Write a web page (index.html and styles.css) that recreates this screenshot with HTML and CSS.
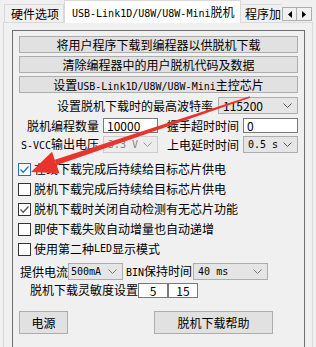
FILE: index.html
```html
<!DOCTYPE html>
<html lang="zh">
<head>
  <meta charset="UTF-8" />
  <title>USB-Link1D 脱机</title>
  <link rel="stylesheet" href="styles.css">
</head>
<body>
  <div class="tabs">
    <div class="tab first">硬件选项</div>
    <div class="tab active"><span class="mono">USB-Link1D/U8W/U8W-Mini</span>脱机</div>
    <div class="tab clipped">程序加</div>
    <div class="scroller">
      <span class="sbtn"><svg width="4" height="7" viewBox="0 0 4 7"><path d="M4 0V7L0 3.5Z" fill="#000"/></svg></span>
      <span class="sbtn"><svg width="4" height="7" viewBox="0 0 4 7"><path d="M0 0V7L4 3.5Z" fill="#000"/></svg></span>
    </div>
  </div>

  <div class="pane">
    <div class="group">
      <button class="btn">将用户程序下载到编程器以供脱机下载</button>
      <button class="btn">清除编程器中的用户脱机代码及数据</button>
      <button class="btn">设置<span class="mono">USB-Link1D/U8W/U8W-Mini</span>主控芯片</button>

      <div class="row baud">
        <span class="label">设置脱机下载时的最高波特率</span>
        <div class="combo wide"><span>115200</span><svg class="chev" width="9" height="5" viewBox="0 0 9 5"><path d="M0.5 0.5L4.5 4.5L8.5 0.5" fill="none" stroke="#555"/></svg></div>
      </div>

      <div class="grid">
        <span class="label">脱机编程数量</span>
        <div class="edit">10000</div>
        <span class="label">握手超时时间</span>
        <div class="edit">0</div>

        <span class="label"><span class="mono">S-VCC</span>输出电压</span>
        <div class="combo disabled"><span class="mono">3.3 V</span><svg class="chev" width="9" height="5" viewBox="0 0 9 5"><path d="M0.5 0.5L4.5 4.5L8.5 0.5" fill="none" stroke="#999"/></svg></div>
        <span class="label">上电延时时间</span>
        <div class="combo"><span class="mono">0.5 s</span><svg class="chev" width="9" height="5" viewBox="0 0 9 5"><path d="M0.5 0.5L4.5 4.5L8.5 0.5" fill="none" stroke="#555"/></svg></div>
      </div>

      <div class="checks">
        <label class="check"><span class="box hot"><svg width="11" height="11" viewBox="0 0 11 11"><path d="M1.5 5.5L4.2 8.2L9.5 2.5" fill="none" stroke="#2c6fc0" stroke-width="1.3"/></svg></span>在线下载完成后持续给目标芯片供电</label>
        <label class="check"><span class="box"></span>脱机下载完成后持续给目标芯片供电</label>
        <label class="check"><span class="box"><svg width="11" height="11" viewBox="0 0 11 11"><path d="M1.5 5.5L4.2 8.2L9.5 2.5" fill="none" stroke="#555" stroke-width="1.3"/></svg></span>脱机下载时关闭自动检测有无芯片功能</label>
        <label class="check"><span class="box"></span>即使下载失败自动增量也自动递增</label>
        <label class="check"><span class="box"></span>使用第二种<span class="mono">LED</span>显示模式</label>
      </div>

      <div class="row current">
        <span class="text">提供电流</span>
        <div class="combo small"><span class="mono">500mA</span><svg class="chev" width="9" height="5" viewBox="0 0 9 5"><path d="M0.5 0.5L4.5 4.5L8.5 0.5" fill="none" stroke="#777"/></svg></div>
        <span class="text hold"><span class="mono">BIN</span>保持时间</span>
        <div class="combo hold-combo"><span class="mono">40 ms</span><svg class="chev" width="9" height="5" viewBox="0 0 9 5"><path d="M0.5 0.5L4.5 4.5L8.5 0.5" fill="none" stroke="#777"/></svg></div>
      </div>

      <div class="row sense">
        <span class="text">脱机下载灵敏度设置</span>
        <div class="edit tiny">5</div>
        <div class="edit tiny">15</div>
      </div>

      <div class="row actions">
        <button class="btn big power">电源</button>
        <button class="btn big help">脱机下载帮助</button>
      </div>
    </div>
  </div>

  <!-- red annotation arrow pointing at the first checkbox -->
  <svg class="arrow" width="316" height="347" viewBox="0 0 316 347">
    <polygon points="250.2,97.8 249.8,96.2 54.8,159.8 56.4,165.2" fill="#e8342c"/>
    <polygon points="31,172 52,151.8 59.5,173.2" fill="#e8342c"/>
  </svg>
</body>
</html>
```

FILE: styles.css
```css
* {
  box-sizing: border-box;
  margin: 0;
  padding: 0;
}

body {
  width: 316px;
  height: 347px;
  overflow: hidden;
  position: relative;
  background: #f0f0f0;
  color: #000;
  font-family: "Noto Sans CJK SC", sans-serif;
  font-size: 12px;
  line-height: 1;
}

.mono {
  font-family: "DejaVu Sans Mono", "Noto Sans CJK SC", monospace;
  font-size: 10px;
}

/* tab strip */
.tabs {
  display: flex;
  align-items: flex-end;
  height: 22px;
  padding-left: 4px;
  position: relative;
  z-index: 1;
}

.tab {
  height: 18px;
  line-height: 17px;
  padding: 0 0 0 6px;
  border: 1px solid #d9d9d9;
  border-bottom: none;
  background: #f0f0f0;
  white-space: nowrap;
  overflow: hidden;
}

.tab.first {
  width: 60px;
}

.tab.active {
  width: 177px;
  height: 23px;
  line-height: 21px;
  margin-bottom: -1px;
  padding-left: 7px;
  background: #fff;
}

.tab.clipped {
  flex: 1;
  min-width: 0;
  border-left: none;
  border-right: none;
  padding-left: 4px;
}

.scroller {
  display: flex;
  height: 14px;
  margin-bottom: 1px;
  margin-right: 4px;
}

.sbtn {
  width: 15px;
  height: 14px;
  display: flex;
  align-items: center;
  justify-content: center;
  border: 1px solid #adadad;
  background: #f0f0f0;
}

.sbtn + .sbtn {
  border-left: none;
}

/* tab page */
.pane {
  height: 330px;
  margin: 0 3px;
  padding: 7px 7px 0 8px;
  border: 1px solid #d9d9d9;
  border-bottom: none;
}

.group {
  height: 340px;
  padding: 5px 6px 0;
  border: 1px solid #6e6e6e;
}

.btn {
  display: block;
  width: 100%;
  height: 17px;
  border: 1px solid #adadad;
  background: #e1e1e1;
  font-family: inherit;
  font-size: 12px;
  line-height: 15px;
  color: #000;
  text-align: center;
}

.btn + .btn {
  margin-top: 3px;
}

.row {
  display: flex;
  align-items: center;
}

.text {
  flex-shrink: 0;
  white-space: nowrap;
}

.label {
  text-align: right;
  white-space: nowrap;
}

.baud {
  margin-top: 4px;
  height: 17px;
}

.baud .label {
  flex: 1;
  padding-right: 5px;
}

.combo {
  display: flex;
  align-items: center;
  justify-content: space-between;
  flex-shrink: 0;
  height: 17px;
  padding: 0 5px 0 4px;
  border: 1px solid #adadad;
  background: #e5e5e5;
  white-space: nowrap;
}

.combo.wide {
  width: 80px;
}

.combo.disabled {
  background: #ececec;
  border-color: #cccccc;
  color: #838383;
}

.edit {
  flex-shrink: 0;
  height: 15px;
  line-height: 13px;
  padding: 0 3px;
  border: 1px solid #7a7a7a;
  background: #fff;
}

.grid {
  display: grid;
  grid-template-columns: 80px 55px 1fr 55px;
  grid-template-rows: 15px 17px;
  column-gap: 4px;
  row-gap: 3px;
  align-items: center;
  margin-top: 4px;
}

/* checkboxes */
.checks {
  margin-top: 6px;
}

.check {
  display: flex;
  align-items: center;
  height: 20px;
  white-space: nowrap;
}

.box {
  width: 13px;
  height: 13px;
  margin: 0 3px 0 -1px;
  display: flex;
  align-items: center;
  justify-content: center;
  border: 1px solid #333;
  background: #fff;
}

.box.hot {
  border-color: #2c6fc0;
}

.current {
  margin-top: 4px;
  height: 17px;
  padding-left: 1px;
}

.combo.small {
  width: 55px;
  padding-left: 2px;
  margin-right: 3px;
}

.hold {
  margin-right: 1px;
}

.combo.hold-combo {
  width: 75px;
}

.sense {
  margin-top: 2px;
  height: 16px;
  padding-left: 11px;
}

.edit.tiny {
  width: 30px;
  text-align: center;
}

.actions {
  margin-top: 13px;
}

.btn.big {
  width: auto;
  height: 23px;
  line-height: 21px;
}

.btn.power {
  width: 49px;
}

.btn.help {
  width: 119px;
  margin: 0 0 0 86px;
}

.arrow {
  position: absolute;
  top: 0;
  left: 0;
  pointer-events: none;
}
```
